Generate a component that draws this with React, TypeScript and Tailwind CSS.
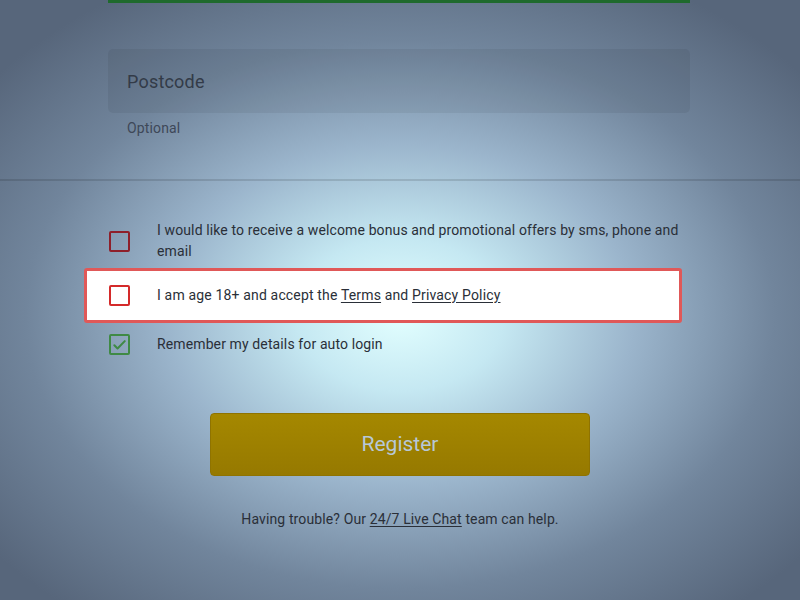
import React from "react";

function Checkbox({ tone }: { tone: "muted" | "error" | "checked" }) {
  if (tone === "checked") {
    return (
      <span className="flex h-[21px] w-[21px] shrink-0 items-center justify-center rounded-[2px] border-2 border-[#3f8a45]">
        <svg width="15" height="15" viewBox="0 0 16 16" fill="none">
          <path d="M2.5 8.8l3.4 3.4L13.6 4.4" stroke="#3f8a45" strokeWidth="2.2" strokeLinecap="round" strokeLinejoin="round" />
        </svg>
      </span>
    );
  }
  if (tone === "error") {
    return <span className="h-[21px] w-[21px] shrink-0 rounded-[2px] border-2 border-[#d42a2a] bg-white" />;
  }
  return <span className="h-[21px] w-[21px] shrink-0 rounded-[2px] border-2 border-[#8e1f2a]" />;
}

export default function App() {
  return (
    <div
      className="h-[600px] w-[800px] overflow-hidden bg-[radial-gradient(ellipse_520px_380px_at_400px_315px,#e2ffff_0%,#c5e8f2_20%,#9bb5cc_45%,#71859c_72%,#57667b_100%)] text-[#2a2f38]"
      style={{ fontFamily: "Roboto, 'Noto Sans', sans-serif" }}
    >
      <div className="ml-[108px] h-[3px] w-[582px] bg-[#1f6a2d]" />

      <div className="ml-[108px] mt-[46px] flex h-[64px] w-[582px] items-center rounded-[5px] bg-black/[0.06] px-[19px]">
        <span className="text-[18px] tracking-[0.2px] text-[#333b48]">Postcode</span>
      </div>
      <p className="ml-[127px] mt-[5px] text-[14px] leading-[20px] tracking-[0.15px] text-[#3e4858]">Optional</p>

      <div className="mt-[41px] h-[2px] w-full bg-black/[0.12]" />

      <div className="ml-[108px] w-[582px] tracking-[0.12px]">
        <div className="mt-[39px] flex items-center gap-[27px] pl-px">
          <Checkbox tone="muted" />
          <p className="text-[14px] leading-[21px]">
            I would like to receive a welcome bonus and promotional offers by sms, phone and email
          </p>
        </div>

        <div className="-ml-[24px] mt-[6px] flex h-[55px] w-[598px] items-center gap-[27px] rounded-[3px] border-[3px] border-[#e05858] bg-white pl-[22px]">
          <Checkbox tone="error" />
          <p className="text-[14px] leading-[21px] tracking-[0.16px]">
            I am age 18+ and accept the <span className="underline underline-offset-2">Terms</span> and{" "}
            <span className="underline underline-offset-2">Privacy Policy</span>
          </p>
        </div>

        <div className="mt-[11px] flex items-center gap-[27px] pl-px">
          <Checkbox tone="checked" />
          <p className="text-[14px] leading-[21px]">Remember my details for auto login</p>
        </div>
      </div>

      <div className="mt-[58px] flex justify-center">
        <button className="flex h-[63px] w-[380px] items-center justify-center rounded-[4px] border border-[#8f7300] bg-[linear-gradient(180deg,#a58800,#967900)] text-[21px] text-[#b7c8d8]">
          Register
        </button>
      </div>

      <p className="mt-[33px] text-center text-[14px] leading-[20px] tracking-[0.12px]">
        Having trouble? Our <span className="underline underline-offset-2">24/7 Live Chat</span> team can help.
      </p>
    </div>
  );
}
